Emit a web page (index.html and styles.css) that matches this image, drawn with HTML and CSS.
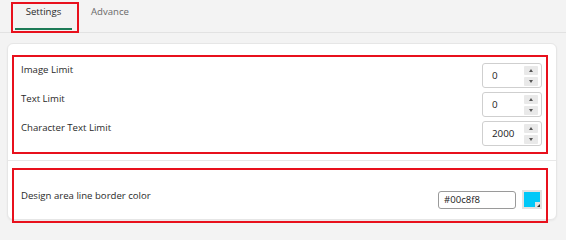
FILE: index.html
```html
<!DOCTYPE html>
<html>
<head>
<meta charset="utf-8">
<link rel="stylesheet" href="styles.css">
</head>
<body>
<div class="tabs">
  <div class="tab-box"><span class="tab active">Settings</span></div>
  <span class="tab other">Advance</span>
</div>
<div class="card">
  <div class="mark box1">
    <div class="row">
      <span class="label">Image Limit</span>
      <div class="num"><span class="val">0</span><div class="spin"><span class="btn up"></span><span class="btn down"></span></div></div>
    </div>
    <div class="row">
      <span class="label">Text Limit</span>
      <div class="num"><span class="val">0</span><div class="spin"><span class="btn up"></span><span class="btn down"></span></div></div>
    </div>
    <div class="row">
      <span class="label">Character Text Limit</span>
      <div class="num"><span class="val">2000</span><div class="spin"><span class="btn up"></span><span class="btn down"></span></div></div>
    </div>
  </div>
  <div class="divider"></div>
  <div class="mark box2">
    <div class="row color-row">
      <span class="label">Design area line border color</span>
      <div class="color-ctl">
        <span class="hex">#00c8f8</span>
        <span class="swatch"><span class="corner"></span></span>
      </div>
    </div>
  </div>
</div>
</body>
</html>
```
FILE: styles.css
```css
* { box-sizing: border-box; }
html, body { margin: 0; padding: 0; }
body {
  background: #f3f3f3;
  font-family: "Open Sans", "Noto Sans", sans-serif;
  font-size: 9.6px;
  color: #2a2a2a;
  width: 566px;
  height: 233px;
  overflow: hidden;
}
.tabs {
  display: flex;
  align-items: flex-start;
  height: 33px;
  border-bottom: 1px solid #e2e2e2;
}
.tab-box {
  margin: 2px 0 0 11px;
  width: 68px;
  height: 31px;
  border: 2px solid #e8101c;
}
.tab {
  display: block;
  line-height: 16px;
  font-size: 9.6px;
}
.tab.active {
  margin-left: 2px;
  width: 57px;
  text-align: center;
  padding-bottom: 8px;
  border-bottom: 2px solid #1d7a56;
  color: #2a2a2a;
}
.tab.other {
  margin: 4px 0 0 12px;
  color: #6a6a6a;
}
.card {
  margin: 10px 9px 0 7px;
  background: #fff;
  border: 1px solid #e6e6e6;
  border-radius: 6px;
  box-shadow: 0 1px 2px rgba(0,0,0,0.05);
}
.mark { border: 2px solid #e8101c; }
.box1 {
  margin: 11px 8px 0 4px;
  padding: 6px 4px 6px 7px;
  display: flex;
  flex-direction: column;
  gap: 4px;
}
.row {
  display: flex;
  justify-content: space-between;
  align-items: flex-start;
}
.label {
  line-height: 14px;
  color: #2a2a2a;
}
.num {
  width: 60px;
  height: 25px;
  border: 1px solid #cfcfcf;
  border-radius: 3px;
  display: flex;
  align-items: center;
  justify-content: space-between;
  padding: 0 3px 0 9px;
}
.val { color: #222; font-size: 9.8px; }
.spin {
  display: flex;
  flex-direction: column;
  gap: 2px;
}
.btn {
  display: flex;
  align-items: center;
  justify-content: center;
  width: 14px;
  height: 9px;
  background: #e9e9e9;
  border-radius: 1px;
}
.btn::after {
  content: "";
  width: 0;
  height: 0;
  border-left: 2.5px solid transparent;
  border-right: 2.5px solid transparent;
}
.up::after { border-bottom: 3px solid #555; }
.down::after { border-top: 3px solid #555; }
.divider {
  margin-top: 6px;
  height: 1px;
  background: #e8e8e8;
}
.box2 {
  margin: 7px 8px -4px 4px;
  padding: 20px 4px 12px 7px;
}
.color-row .label { margin-top: -1px; }
.color-ctl {
  display: flex;
  align-items: center;
  gap: 6px;
}
.hex {
  width: 78px;
  height: 18px;
  border: 1px solid #9a9a9a;
  border-radius: 3px;
  padding-left: 5px;
  line-height: 16px;
  color: #222;
}
.swatch {
  position: relative;
  width: 20px;
  height: 19px;
  background: #00c8f8;
  border: 2px solid #e2e2e2;
}
.corner {
  position: absolute;
  right: -1px;
  bottom: -1px;
  width: 6px;
  height: 6px;
  background: #e2e2e2;
}
.corner::after {
  content: "";
  position: absolute;
  right: 1px;
  bottom: 1px;
  width: 0;
  height: 0;
  border-left: 3px solid transparent;
  border-bottom: 3px solid #333;
}
```
